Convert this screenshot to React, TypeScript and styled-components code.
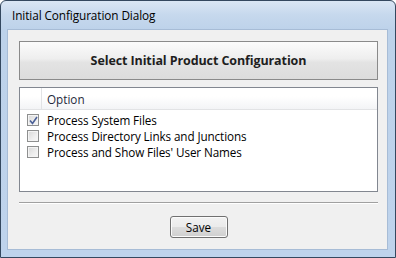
import React from "react";
import styled, { createGlobalStyle } from "styled-components";

const Global = createGlobalStyle`
  html, body { margin: 0; padding: 0; background: #ffffff; }
  body { font-family: "Open Sans", "Noto Sans", sans-serif; }
  * { box-sizing: border-box; }
`;

const Window = styled.div`
  width: 396px;
  height: 258px;
  border: 1px solid #34485f;
  border-radius: 6px 6px 0 0;
  background: linear-gradient(to bottom, #dae6f4 0px, #c6d8ed 14px, #bdd2ea 29px, #bed3ec 100%);
  display: flex;
  flex-direction: column;
  padding: 0 7px 7px 6px;
`;

const TitleBar = styled.div`
  height: 28px;
  display: flex;
  align-items: center;
  padding-left: 5px;
  font-size: 11.8px;
  color: #000;
  letter-spacing: -0.1px;
`;

const Client = styled.div`
  flex: 1;
  background: #f0f0f0;
  border: 1px solid #a7bcd6;
  padding: 11px 9px 11px 11px;
  display: flex;
  flex-direction: column;
`;

const Banner = styled.div`
  height: 39px;
  border: 1px solid #8a8a8a;
  background: linear-gradient(to bottom, #fbfbfb 0%, #eeeeee 45%, #e3e3e3 55%, #dcdcdc 100%);
  display: flex;
  align-items: center;
  justify-content: center;
  font-size: 12.5px;
  font-weight: 700;
  color: #1e1e1e;
  letter-spacing: -0.1px;
`;

const ListBox = styled.div`
  margin-top: 7px;
  height: 105px;
  border: 1px solid #828790;
  background: #ffffff;
  display: flex;
  flex-direction: column;
`;

const HeaderRow = styled.div`
  height: 22px;
  display: flex;
  background: linear-gradient(to bottom, #ffffff 0%, #ffffff 40%, #f3f4f6 100%);
  border-bottom: 1px solid #e2e3e5;
`;

const HeaderCell = styled.div<{ $w?: number }>`
  ${(p) => (p.$w ? `width: ${p.$w}px;` : "flex: 1;")}
  display: flex;
  align-items: center;
  padding-left: 5px;
  font-size: 11.7px;
  color: #1e2a3b;
  border-right: ${(p) => (p.$w ? "1px solid #e2e3e5" : "none")};
`;

const Rows = styled.div`
  padding-top: 2px;
  display: flex;
  flex-direction: column;
`;

const Row = styled.div`
  height: 16px;
  display: flex;
  align-items: center;
  padding-left: 7px;
  gap: 8px;
  font-size: 11.7px;
  color: #000;
  letter-spacing: -0.1px;
`;

const Box = styled.span`
  width: 12px;
  height: 12px;
  border: 1px solid #8e8f8f;
  background: linear-gradient(135deg, #d7d7d7 0%, #eeeeee 60%, #f7f7f7 100%);
  box-shadow: inset 0 0 0 1px #f4f4f4;
  display: flex;
  align-items: center;
  justify-content: center;
  flex-shrink: 0;
`;

const Separator = styled.div`
  margin-top: 10px;
  height: 2px;
  border-top: 1px solid #a0a0a0;
  border-bottom: 1px solid #ffffff;
`;

const Footer = styled.div`
  margin-top: 12px;
  display: flex;
  justify-content: center;
`;

const Button = styled.button`
  width: 58px;
  height: 22px;
  border: 1px solid #707070;
  border-radius: 3px;
  background: linear-gradient(to bottom, #f2f2f2 0%, #ebebeb 49%, #dddddd 50%, #cfcfcf 100%);
  box-shadow: inset 0 0 0 1px #fbfbfb;
  font-family: "Open Sans", "Noto Sans", sans-serif;
  font-size: 11.7px;
  color: #000;
  padding: 0;
  cursor: default;
`;

function Check({ checked }: { checked: boolean }) {
  return (
    <Box>
      {checked && (
        <svg width="9" height="9" viewBox="0 0 9 9">
          <path d="M1 4.5 L3.5 7.5 L8 1" fill="none" stroke="#4a5f97" strokeWidth="1.6" />
        </svg>
      )}
    </Box>
  );
}

const options = [
  { label: "Process System Files", checked: true },
  { label: "Process Directory Links and Junctions", checked: false },
  { label: "Process and Show Files' User Names", checked: false },
];

export default function App() {
  return (
    <>
      <Global />
      <Window>
        <TitleBar>Initial Configuration Dialog</TitleBar>
        <Client>
          <Banner>Select Initial Product Configuration</Banner>
          <ListBox>
            <HeaderRow>
              <HeaderCell $w={22} />
              <HeaderCell>Option</HeaderCell>
            </HeaderRow>
            <Rows>
              {options.map((o) => (
                <Row key={o.label}>
                  <Check checked={o.checked} />
                  {o.label}
                </Row>
              ))}
            </Rows>
          </ListBox>
          <Separator />
          <Footer>
            <Button>Save</Button>
          </Footer>
        </Client>
      </Window>
    </>
  );
}
